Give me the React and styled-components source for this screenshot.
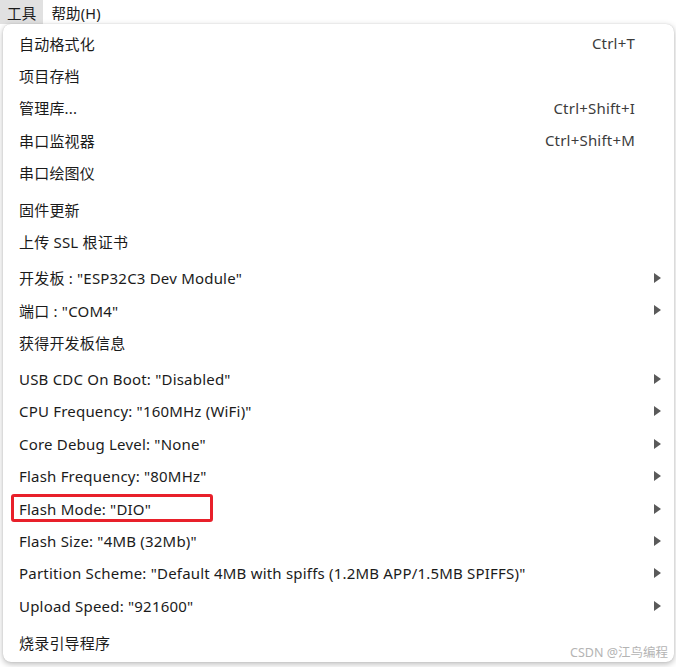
import React from 'react'
import styled, { createGlobalStyle } from 'styled-components';

const GlobalStyle = createGlobalStyle`
    html, body {
        margin: 0;
        padding: 0;
        background: #ffffff;
    }
    body {
        font-family: "Noto Sans", "Noto Sans CJK SC", sans-serif;
        color: #1b1b1b;
    }
`;

// 메뉴 그룹 데이터
const groups = [
    [
        { label: '自动格式化', shortcut: 'Ctrl+T' },
        { label: '项目存档' },
        { label: '管理库...', shortcut: 'Ctrl+Shift+I' },
        { label: '串口监视器', shortcut: 'Ctrl+Shift+M' },
        { label: '串口绘图仪' },
    ],
    [
        { label: '固件更新' },
        { label: '上传 SSL 根证书' },
    ],
    [
        { label: '开发板 : "ESP32C3 Dev Module"', sub: true },
        { label: '端口 : "COM4"', sub: true },
        { label: '获得开发板信息' },
    ],
    [
        { label: 'USB CDC On Boot: "Disabled"', sub: true },
        { label: 'CPU Frequency: "160MHz (WiFi)"', sub: true },
        { label: 'Core Debug Level: "None"', sub: true },
        { label: 'Flash Frequency: "80MHz"', sub: true },
        { label: 'Flash Mode: "DIO"', sub: true, marked: true },
        { label: 'Flash Size: "4MB (32Mb)"', sub: true },
        { label: 'Partition Scheme: "Default 4MB with spiffs (1.2MB APP/1.5MB SPIFFS)"', sub: true },
        { label: 'Upload Speed: "921600"', sub: true },
    ],
    [
        { label: '烧录引导程序' },
    ],
];

const Arrow = () => (
    <svg width="7" height="10" viewBox="0 0 7 10">
        <path d="M0 0 L7 5 L0 10 Z" fill="#5a5a5a" />
    </svg>
);

const App = () => {
    return (
        <Page>
            <GlobalStyle />
            <MenuBar>
                <MenuTitle active>工具</MenuTitle>
                <MenuTitle>帮助(H)</MenuTitle>
            </MenuBar>
            <Panel>
                {groups.map((group, gi) => (
                    <Group key={gi}>
                        {group.map((item) => (
                            <Row key={item.label}>
                                <Label>{item.label}</Label>
                                {item.shortcut && <Shortcut>{item.shortcut}</Shortcut>}
                                <ArrowCell>{item.sub && <Arrow />}</ArrowCell>
                                {item.marked && <Mark />}
                            </Row>
                        ))}
                    </Group>
                ))}
                <Watermark>CSDN @江鸟编程</Watermark>
            </Panel>
        </Page>
    )
}

export default App

const Page = styled.div`
    width: 676px;
    height: 667px;
    overflow: hidden;
    position: relative;
`;

const MenuBar = styled.div`
    display: flex;
    height: 24px;
    align-items: stretch;
    font-size: 14.5px;
    background: #ffffff;
`;

const MenuTitle = styled.div`
    display: flex;
    align-items: center;
    padding: 0 7px;
    letter-spacing: 0.2px;
    background: ${({ active }) => active ? '#e1e1e1' : 'transparent'};
    color: #1b1b1b;
    & + & {
        padding-left: 8px;
    }
`;

const Panel = styled.div`
    position: relative;
    margin-left: 3px;
    width: 671px;
    height: 638px;
    box-sizing: border-box;
    padding-top: 3px;
    background: #ffffff;
    border-radius: 8px;
    box-shadow: 0 2px 6px rgba(0, 0, 0, 0.28), 0 0 1px rgba(0, 0, 0, 0.2);
`;

const Group = styled.div`
    & + & {
        margin-top: 4px;
    }
`;

const Row = styled.div`
    position: relative;
    display: flex;
    align-items: center;
    height: 32.4px;
    padding: 0 10px 0 16px;
    font-size: 15px;
    letter-spacing: 0.2px;
`;

const Label = styled.span`
    flex: 1;
    white-space: nowrap;
`;

const Shortcut = styled.span`
    color: #3c3c3c;
    margin-right: 15px;
`;

const ArrowCell = styled.span`
    width: 14px;
    display: flex;
    justify-content: center;
    align-items: center;
`;

const Mark = styled.div`
    position: absolute;
    left: 8px;
    top: 2px;
    width: 202px;
    height: 28px;
    box-sizing: border-box;
    border: 3px solid #e8202a;
    border-radius: 3px;
`;

const Watermark = styled.div`
    position: absolute;
    right: 6px;
    bottom: 1px;
    font-size: 12.5px;
    color: #b4b4b4;
`;
